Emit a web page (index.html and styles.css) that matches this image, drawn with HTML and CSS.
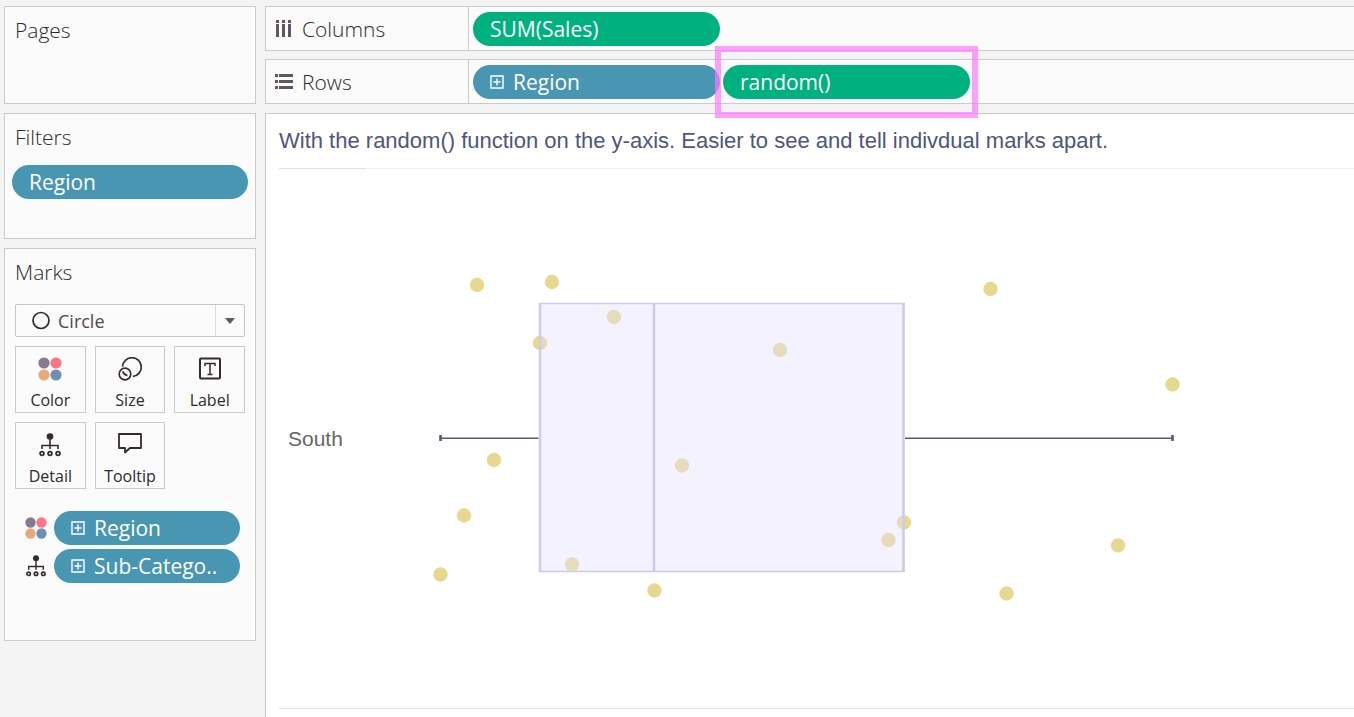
FILE: index.html
```html
<!DOCTYPE html>
<html lang="en">
<head>
    <meta charset="UTF-8">
    <meta name="viewport" content="width=device-width, initial-scale=1.0">
    <title>Box plot worksheet</title>
    <link rel="stylesheet" href="styles.css">
</head>
<body>
    <!-- Shared icons -->
    <svg class="sprite" width="0" height="0" aria-hidden="true">
        <symbol id="icon-color" viewBox="0 0 24 24">
            <circle cx="6" cy="6" r="5.6" fill="#857a90"/>
            <circle cx="18" cy="6" r="5.6" fill="#fa7685"/>
            <circle cx="6" cy="18" r="5.6" fill="#e8a878"/>
            <circle cx="18" cy="18" r="5.6" fill="#6c8fb6"/>
        </symbol>
        <symbol id="icon-detail" viewBox="0 0 24 24">
            <circle cx="12" cy="3.5" r="3.3" fill="#332b30"/>
            <path d="M12 6v10M4 16v-3.500h16V16" fill="none" stroke="#332b30" stroke-width="1.6"/>
            <g fill="none" stroke="#332b30" stroke-width="1.8">
                <circle cx="4" cy="20.5" r="1.900"/>
                <circle cx="12" cy="20.5" r="1.900"/>
                <circle cx="20" cy="20.5" r="1.900"/>
            </g>
        </symbol>
        <symbol id="icon-plus" viewBox="0 0 14 14">
            <path d="M1 1h12v12H1zM7 3.5v7M3.5 7h7" fill="none" stroke="#fff" stroke-width="1.4"/>
        </symbol>
    </svg>

    <div class="workspace">
        <aside class="sidebar">
            <section class="panel pages">
                <h2>Pages</h2>
            </section>

            <section class="panel filters">
                <h2>Filters</h2>
                <button class="pill dimension">Region</button>
            </section>

            <section class="panel marks">
                <h2><label for="markType">Marks</label></h2>
                <div class="mark-type">
                    <svg class="mark-icon" width="20" height="20" viewBox="0 0 20 20"><circle cx="10" cy="9.500" r="8" fill="none" stroke="#332b30" stroke-width="1.7"/></svg>
                    <select id="markType">
                        <option>Circle</option>
                    </select>
                    <span class="arrow"></span>
                </div>
                <div class="mark-buttons">
                    <button class="mark-button">
                        <svg width="24" height="24"><use href="#icon-color"/></svg>
                        Color
                    </button>
                    <button class="mark-button">
                        <svg width="24" height="24" viewBox="0 0 24 24" fill="none" stroke="#332b30" stroke-width="1.7">
                            <path d="M4.500 9.600A9.400 9.400 0 1 1 15 19.400"/>
                            <circle cx="7" cy="17" r="5.8"/>
                            <path d="M4.8 14.2c.6 2.4 2 3.8 4.6 4.4"/>
                        </svg>
                        Size
                    </button>
                    <button class="mark-button">
                        <svg width="24" height="24" viewBox="0 0 24 24" fill="none" stroke="#332b30">
                            <rect x="2" y="1.500" width="20" height="20" rx="1" stroke-width="2"/>
                            <path d="M7 9V6.5h10V9M12 6.5v11M9.5 17.5h5" stroke-width="1.5"/>
                        </svg>
                        Label
                    </button>
                    <button class="mark-button">
                        <svg width="24" height="24"><use href="#icon-detail"/></svg>
                        Detail
                    </button>
                    <button class="mark-button">
                        <svg width="24" height="24" viewBox="0 0 24 24" fill="none" stroke="#332b30" stroke-width="1.8">
                            <path d="M1 1h22v14H12L7 19.500v-4.500H1z" stroke-linejoin="round"/>
                        </svg>
                        Tooltip
                    </button>
                </div>
                <ul class="encodings">
                    <li>
                        <svg width="22" height="22"><use href="#icon-color"/></svg>
                        <button class="pill dimension"><svg width="14" height="14"><use href="#icon-plus"/></svg>Region</button>
                    </li>
                    <li>
                        <svg width="22" height="22"><use href="#icon-detail"/></svg>
                        <button class="pill dimension"><svg width="14" height="14"><use href="#icon-plus"/></svg>Sub-Catego..</button>
                    </li>
                </ul>
            </section>
        </aside>

        <main class="content">
            <div class="shelves">
                <section class="shelf">
                    <h2>
                        <svg width="20" height="20" viewBox="0 0 20 20" fill="#5f585d">
                            <path d="M2 1h3v3H2zM8 1h3v3H8zM14 1h3v3h-3zM2 5h3v13H2zM8 5h3v13H8zM14 5h3v13h-3z"/>
                        </svg>
                        Columns
                    </h2>
                    <div class="pills">
                        <button class="pill measure">SUM(Sales)</button>
                    </div>
                </section>
                <section class="shelf">
                    <h2>
                        <svg width="20" height="20" viewBox="0 0 20 20" fill="#5f585d">
                            <path d="M1 2h3v3H1zM5 2h14v3H5zM1 8h3v3H1zM5 8h14v3H5zM1 14h3v3H1zM5 14h14v3H5z"/>
                        </svg>
                        Rows
                    </h2>
                    <div class="pills">
                        <button class="pill dimension"><svg width="14" height="14"><use href="#icon-plus"/></svg>Region</button>
                        <span class="highlight"><button class="pill measure">random()</button></span>
                    </div>
                </section>
            </div>

            <section class="view">
                <h1>With the random() function on the y-axis. Easier to see and tell indivdual marks apart.</h1>
                <div class="chart">
                    <div class="row-label">South</div>
                    <svg class="plot" role="img" aria-label="Box plot of sales for South">
                        <g fill="#e7d88d">
                            <circle cx="111" cy="116" r="7.200"/>
                            <circle cx="186" cy="113" r="7.200"/>
                            <circle cx="248" cy="148" r="7.200"/>
                            <circle cx="174" cy="174" r="7.200"/>
                            <circle cx="414" cy="181" r="7.200"/>
                            <circle cx="624.500" cy="120" r="7.200"/>
                            <circle cx="806.500" cy="215.500" r="7.200"/>
                            <circle cx="128" cy="291" r="7.200"/>
                            <circle cx="316" cy="296.500" r="7.200"/>
                            <circle cx="98" cy="346.500" r="7.200"/>
                            <circle cx="74.500" cy="405.500" r="7.200"/>
                            <circle cx="206" cy="395.500" r="7.200"/>
                            <circle cx="288.500" cy="421.500" r="7.200"/>
                            <circle cx="538" cy="353.500" r="7.200"/>
                            <circle cx="522.500" cy="371" r="7.200"/>
                            <circle cx="752" cy="376.500" r="7.200"/>
                            <circle cx="640.500" cy="424.500" r="7.200"/>
                        </g>
                        <!-- quartile box, drawn over the marks -->
                        <rect x="174" y="135" width="364" height="268" fill="#e5e0fd" fill-opacity=".42"/>
                        <path d="M173 134.500h366M173 402.500h366" stroke="#cfcbe9" stroke-width="1.600"/>
                        <path d="M174 134v269M288 134v269M537.500 134v269" stroke="#cfcbe9" stroke-width="2.600"/>
                        <!-- whiskers -->
                        <path d="M74 269.300h98.500M539 269.300h268" stroke="#5c5580" stroke-width="1.600"/>
                        <path d="M74.500 266v6M806.500 266v6" stroke="#5c5580" stroke-width="2.600"/>
                    </svg>
                </div>
            </section>
        </main>
    </div>
</body>
</html>
```

FILE: styles.css
```css
* {
    box-sizing: border-box;
}
body {
    margin: 0;
    background: #f4f4f4;
    color: #2f292d;
    font-family: "Open Sans", "Noto Sans", sans-serif;
}
h1, h2, ul {
    margin: 0;
    padding: 0;
}
h2 {
    font-size: 21px;
    line-height: 28px;
    font-weight: 300;
}
button, select {
    font-family: inherit;
    color: inherit;
}
.sprite {
    display: block;
}
.workspace {
    display: flex;
    gap: 9px;
    min-height: 100vh;
    padding: 6px 0 0 4px;
}

/* Sidebar */
.sidebar {
    display: flex;
    flex: none;
    flex-direction: column;
    gap: 9px;
    width: 252px;
}
.panel {
    padding: 9px 10px;
    background: #fbfbfb;
    border: 1px solid #cbcbcb;
}
.pages {
    min-height: 98px;
}
.filters {
    min-height: 126px;
    padding: 9px 7px;
}
.filters h2 {
    padding-left: 3px;
}
.filters .pill {
    width: 100%;
    margin-top: 14px;
}
.marks {
    min-height: 393px;
}
.pill {
    display: flex;
    align-items: center;
    gap: 9px;
    height: 34px;
    padding: 0 17px;
    border: none;
    border-radius: 17px;
    color: #fff;
    font-size: 21px;
    font-weight: 500;
    text-align: left;
    cursor: pointer;
}
.dimension {
    background: #4996b2;
}
.measure {
    background: #00b180;
}
.mark-type {
    position: relative;
    display: flex;
    align-items: center;
    height: 33px;
    margin-top: 18px;
    padding-left: 15px;
    border: 1px solid #c6c6c6;
    border-radius: 2px;
}
.mark-type select {
    flex: 1;
    height: 31px;
    padding: 0 7px;
    appearance: none;
    background: none;
    border: none;
    color: #4f494e;
    font-size: 18px;
}
.arrow {
    position: absolute;
    top: 0;
    right: 0;
    display: flex;
    align-items: center;
    justify-content: center;
    width: 29px;
    height: 31px;
    border-left: 1px solid #dcdcdc;
    pointer-events: none;
}
.arrow::before {
    content: "";
    border: 5px solid transparent;
    border-top: 6px solid #5f585d;
    border-bottom: 0;
}
.mark-buttons {
    display: grid;
    grid-template-columns: repeat(3, 1fr);
    gap: 9px;
    margin-top: 9px;
}
.mark-button {
    display: flex;
    flex-direction: column;
    align-items: center;
    gap: 8px;
    height: 67px;
    padding: 10px 0 0;
    background: #fbfbfb;
    border: 1px solid #cbcbcb;
    font-size: 16px;
    line-height: 22px;
    cursor: pointer;
}
.encodings {
    display: flex;
    flex-direction: column;
    gap: 4px;
    margin-top: 22px;
    padding: 0 5px 0 10px;
    list-style: none;
}
.encodings li {
    display: flex;
    align-items: center;
    gap: 7px;
}
.encodings .pill {
    flex: 1;
}

/* Shelves */
.content {
    display: flex;
    flex: 1;
    flex-direction: column;
    gap: 9px;
    min-width: 0;
}
.shelves {
    display: flex;
    flex-direction: column;
    gap: 8px;
}
.shelf {
    display: flex;
    height: 45px;
    background: #fbfbfb;
    border: 1px solid #cbcbcb;
    border-right: none;
}
.shelf h2 {
    display: flex;
    flex: none;
    align-items: center;
    gap: 8px;
    width: 203px;
    padding-left: 8px;
    border-right: 1px solid #cbcbcb;
}
.pills {
    display: flex;
    align-items: center;
    gap: 3px;
    padding-left: 4px;
}
.pills .pill {
    width: 247px;
}
.highlight {
    position: relative;
}
.highlight::after {
    content: "";
    position: absolute;
    inset: -19px -8px;
    border: 6px solid rgba(255, 120, 255, 0.7);
    pointer-events: none;
}

/* Chart */
.view {
    flex: 1;
    padding: 12px 0 8px 13px;
    background: #fff;
    border: 1px solid #cbcbcb;
    border-right: none;
    border-bottom: none;
    font-family: "Liberation Sans", Arial, sans-serif;
}
.view h1 {
    color: #4f5480;
    font-size: 22px;
    line-height: 30px;
    font-weight: 400;
}
.chart {
    display: flex;
    margin-top: 12px;
}
.row-label {
    display: flex;
    flex: none;
    align-items: center;
    width: 87px;
    padding-left: 9px;
    border-top: 1px solid #dfdcfc;
    border-bottom: 1px solid #dfdcfc;
    color: #666;
    font-size: 21px;
}
.plot {
    flex: 1;
    min-width: 0;
    height: 541px;
    border-top: 1px solid #efeefe;
    border-bottom: 1px solid #dfdcfc;
}
```
